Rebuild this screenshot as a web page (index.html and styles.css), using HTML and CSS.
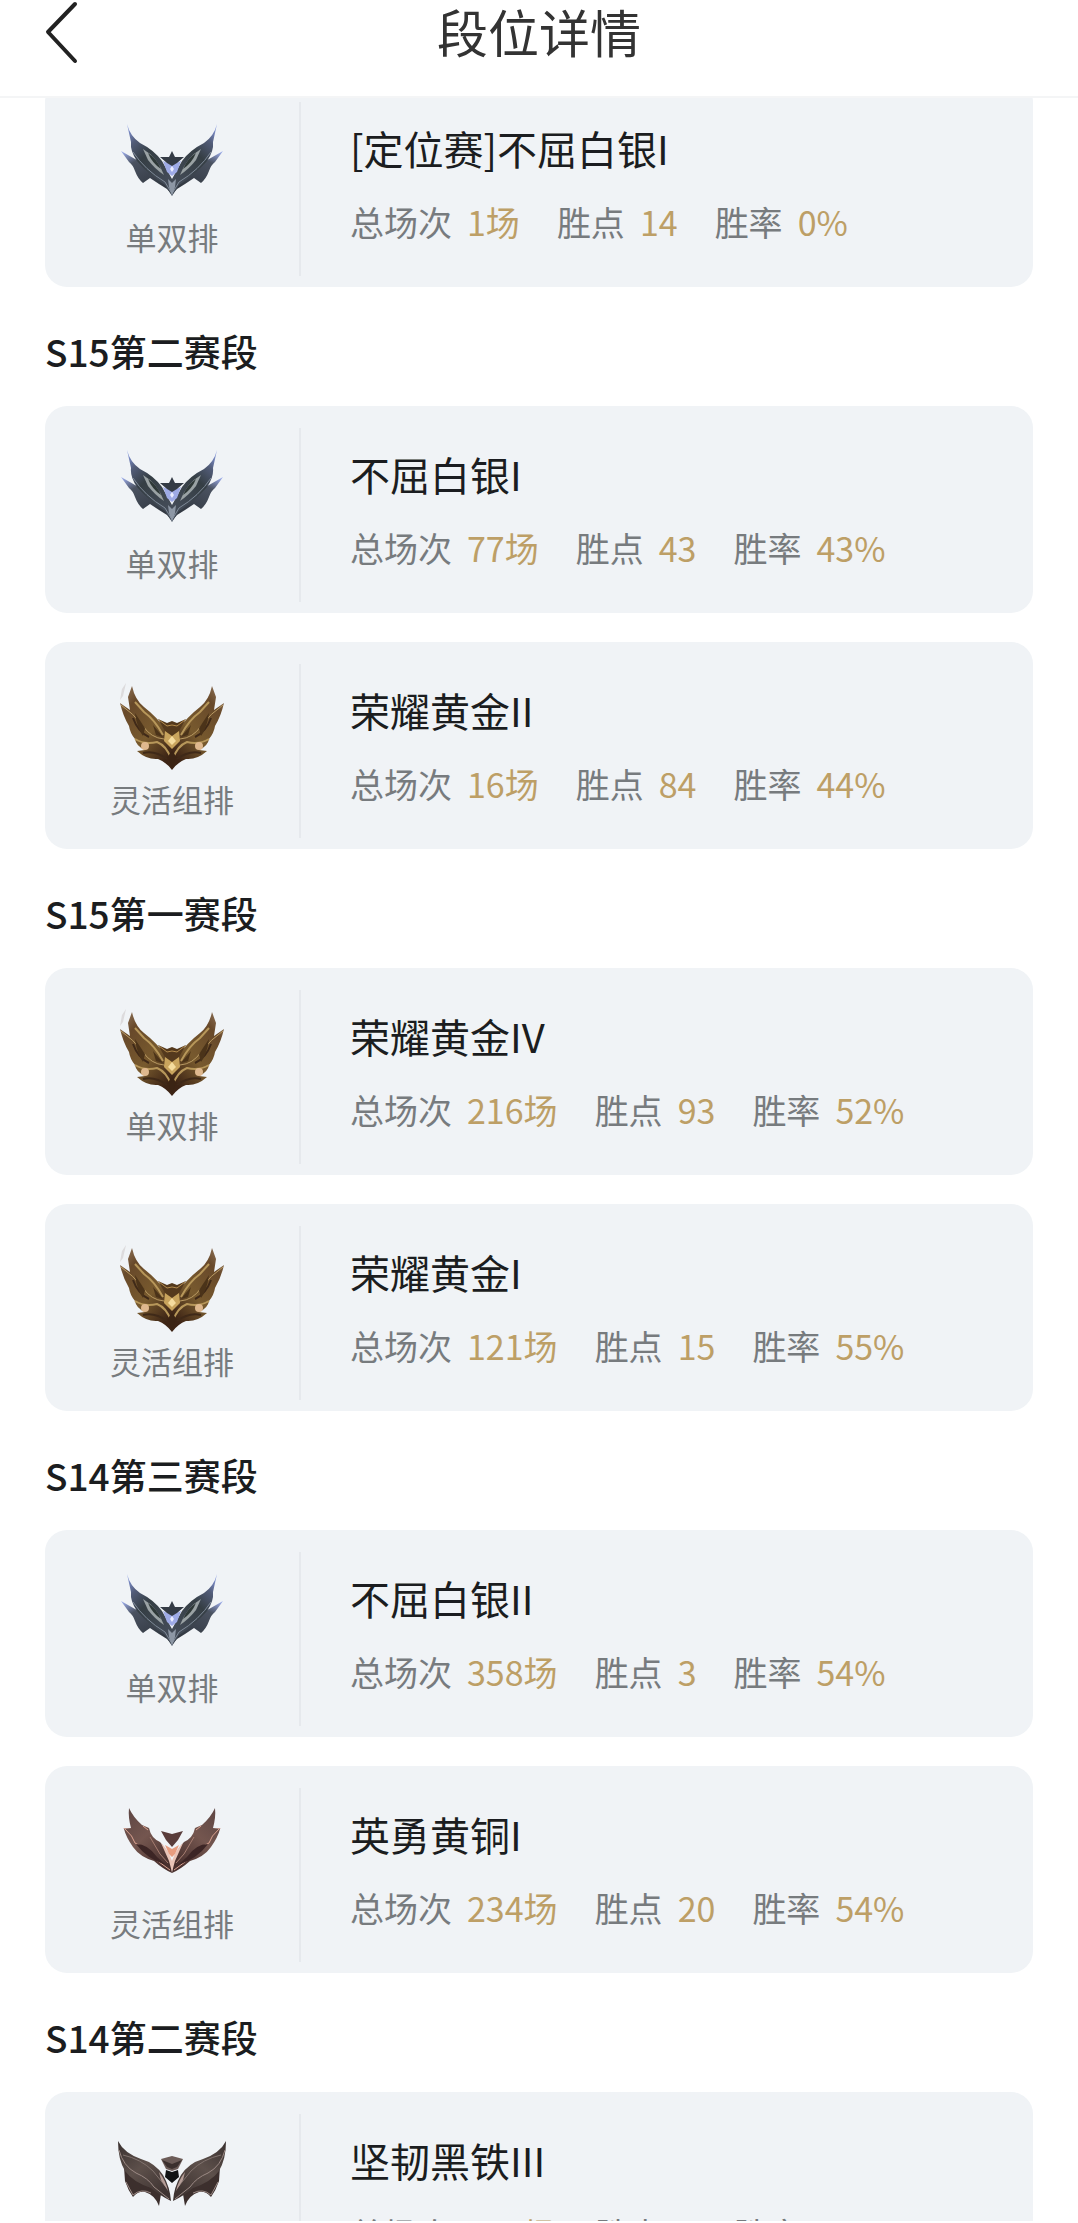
FILE: index.html
```html
<!DOCTYPE html>
<html lang="zh-CN">
<head>
<meta charset="utf-8">
<meta name="viewport" content="width=device-width, initial-scale=1">
<title>段位详情</title>
<link rel="stylesheet" href="styles.css">
</head>
<body>
<svg class="sprite" aria-hidden="true">
  <defs>
    <linearGradient id="g-silver" x1="0" y1="0" x2="0.6" y2="1">
      <stop offset="0" stop-color="#8fa4f2"/><stop offset="0.25" stop-color="#525c78"/><stop offset="0.5" stop-color="#353e44"/><stop offset="1" stop-color="#444c58"/>
    </linearGradient>
    <linearGradient id="g-silver-low" x1="0" y1="0" x2="0.6" y2="1">
      <stop offset="0" stop-color="#a5b6fa"/><stop offset="0.3" stop-color="#4a5260"/><stop offset="1" stop-color="#30363f"/>
    </linearGradient>
    <linearGradient id="g-gold" x1="0" y1="0" x2="0.7" y2="1">
      <stop offset="0" stop-color="#9a7f67"/><stop offset="0.25" stop-color="#68492a"/><stop offset="0.65" stop-color="#785a2e"/><stop offset="1" stop-color="#3d2415"/>
    </linearGradient>
    <linearGradient id="g-bronze" x1="0" y1="0" x2="0.7" y2="1">
      <stop offset="0" stop-color="#5c4442"/><stop offset="0.5" stop-color="#74564f"/><stop offset="1" stop-color="#49302e"/>
    </linearGradient>
    <linearGradient id="g-iron" x1="0" y1="0" x2="0.7" y2="1">
      <stop offset="0" stop-color="#39302f"/><stop offset="0.5" stop-color="#5d504b"/><stop offset="1" stop-color="#3e3331"/>
    </linearGradient>

    <g id="silver-wing">
      <path fill="url(#g-silver-low)" d="M22 42 L36 50 L52 57 L72 74 L73 86 L68 80 L60 75 L51 69 L44 74 Q39 70 36 62 Q34 56 30 53 Z"/>
      <path fill="url(#g-silver)" d="M28 15 Q31 27 41 34 Q55 41 63 52 L73 70 L73 87 L66 76 Q50 66 38 52 Q31 42 32 33 Z"/>
      <path fill="#9aa2a4" d="M44 40 Q58 48 65 66 Q56 60 49 51 Z"/>
      <path fill="#2f3938" d="M49 44 Q58 50 62 60 Q53 54 49 44 Z"/>
      <path fill="none" stroke="#7f8a98" stroke-width="1" d="M34 43 Q46 61 66 73 L72 83"/>
      <path fill="#8d97a5" d="M69 70 L73 74 L73 87 L70 78 Z"/>
    </g>
    <symbol id="silver" viewBox="0 0 146 110">
      <use href="#silver-wing"/>
      <use href="#silver-wing" transform="matrix(-1 0 0 1 146 0)"/>
      <path fill="#9eaae6" d="M64 52 L73 56 L82 52 L78 63 L73 67 L68 63 Z"/>
      <path fill="#343b45" d="M73 42 L76 48 L85 48 L78 54 L73 57 L68 54 L61 48 L70 48 Z"/>
      <path fill="#e9ecff" d="M73 57 L75 60 L73 63 L71 60 Z"/>
    </symbol>

    <g id="gold-wing">
      <path fill="url(#g-gold)" d="M33 15 Q36 29 45 36 Q58 46 68 60 L73 68 L73 99 Q67 91 59 88 Q48 89 38 80 L46 79 Q37 75 36 68 Q31 62 30 55 Q24 45 21 32 L31 39 L29 26 Z"/>
      <path fill="none" stroke="#b99a63" stroke-width="1" d="M22 34 Q34 42 44 55 Q52 67 65 68 L72 73"/>
      <path fill="none" stroke="#b7975a" stroke-width="2" d="M36 31 L45 41 Q56 49 64 64 M36 68 Q46 74 58 71 Q68 75 72 88"/>
      <path fill="none" stroke="#3f2918" stroke-width="2" d="M34 47 Q39 61 50 66 M44 82 Q56 79 68 88"/>
      <path fill="#4b3319" d="M36 42 L46 57 L44 65 Q38 57 36 42 Z M54 54 L64 66 L57 64 Z"/>
      <circle cx="46" cy="75" r="4" fill="#dfb88e"/>
    </g>
    <symbol id="gold" viewBox="0 0 146 110">
      <path fill="#c9c4c4" opacity="0.5" d="M27 12 L23 18 L21 29 L24 25 Z"/>
      <use href="#gold-wing"/>
      <use href="#gold-wing" transform="matrix(-1 0 0 1 146 0)"/>
      <path fill="#54391d" d="M59 48 L68 52 L73 50 L78 52 L87 48 L80 60 L73 67 L66 60 Z"/>
      <path fill="none" stroke="#b38b4d" stroke-width="1" d="M60 49 L68 55 L73 54 L78 55 L86 49"/>
      <path fill="#c9a45d" d="M66 60 L73 65 L80 60 L81 70 L73 78 L65 70 Z"/>
      <path fill="#f5dc9e" d="M73 65 L77 70 L73 74 L69 70 Z"/>
      <path fill="#3b2414" d="M73 80 L77 85 L73 98 L69 85 Z"/>
    </symbol>

    <g id="bronze-wing">
      <path fill="#c99283" d="M24 33 L35 34 L32 39 Z"/>
      <path fill="url(#g-bronze)" d="M30 13 Q34 22 43 30 L50 33 Q52 43 61 47 Q67 53 72 66 L73 78 Q64 74 55 66 Q41 62 34 52 Q27 42 25 34 L32 33 Q29 22 30 13 Z"/>
      <path fill="none" stroke="#dca391" stroke-width="1" d="M26 34 Q34 41 36 48 Q49 54 56 64 L71 75 M44 31 L49 35"/>
      <path fill="#3c2525" d="M37 49 Q49 49 58 62 L67 70 Q48 64 37 49 Z"/>
      <path fill="none" stroke="#a67d71" stroke-width="1" d="M51 42 L61 59 L69 68"/>
      <path fill="#e9c4b7" d="M62 48 Q69 54 73 66 L73 77 L70 66 Z"/>
    </g>
    <symbol id="bronze" viewBox="0 0 146 110">
      <use href="#bronze-wing"/>
      <use href="#bronze-wing" transform="matrix(-1 0 0 1 146 0)"/>
      <path fill="#e79d80" d="M66 50 L73 54 L80 50 L76 59 L73 62 L70 59 Z"/>
      <path fill="#5a3d3b" d="M62 36 L73 39 L84 36 L79 45 L73 52 L67 45 Z"/>
    </symbol>

    <g id="iron-wing">
      <path fill="#3c2f2d" d="M25 46 L40 60 L55 65 L62 73 L60 85 Q56 74 46 71 Q39 70 34 76 Q29 69 26 60 Z"/>
      <path fill="url(#g-iron)" d="M19 20 Q25 32 42 38 Q56 42 64 54 Q71 66 72 80 Q60 74 52 67 Q34 61 26 50 Q19 38 19 20 Z"/>
      <path fill="none" stroke="#9b8984" stroke-width="1" d="M20 29 Q24 45 37 52 Q49 57 55 66 L70 78 M27 61 L34 74 Q42 67 52 72"/>
      <path fill="none" stroke="#81736e" stroke-width="1" d="M24 34 Q42 38 54 50 L67 66"/>
      <path fill="#b69e98" d="M60 51 Q67 60 69 70 L62 59 Z"/>
    </g>
    <symbol id="iron" viewBox="0 0 146 110">
      <use href="#iron-wing"/>
      <use href="#iron-wing" transform="matrix(-1 0 0 1 146 0)"/>
      <path fill="#6c5c58" d="M62 38 L73 35 L84 38 L79 48 L73 50 L67 48 Z"/>
      <path fill="#3b302e" d="M63 39 L73 43 L83 39 L78 46 L73 48 L68 46 Z"/>
      <path fill="#111314" d="M67 49 L73 51 L79 49 L80 56 L73 62 L66 56 Z"/>
    </symbol>
  </defs>
</svg>

<div class="app">
  <header class="topbar">
    <button class="back" type="button" aria-label="返回">
      <svg viewBox="0 0 34 64" aria-hidden="true"><path d="M31 4 L4 32 L31 61"/></svg>
    </button>
    <h1 class="topbar-title">段位详情</h1>
  </header>

  <main class="content">
    <div class="seasons">
      <section class="season">
        <article class="card">
          <div class="queue"><svg class="emblem" aria-hidden="true"><use href="#silver"/></svg><span>单双排</span></div>
          <div class="detail">
            <h3 class="rank">[定位赛]不屈白银I</h3>
            <dl class="stats"><div><dt>总场次</dt><dd>1场</dd></div><div><dt>胜点</dt><dd>14</dd></div><div><dt>胜率</dt><dd>0%</dd></div></dl>
          </div>
        </article>
      </section>

      <section class="season">
        <h2 class="season-title">S15第二赛段</h2>
        <article class="card">
          <div class="queue"><svg class="emblem" aria-hidden="true"><use href="#silver"/></svg><span>单双排</span></div>
          <div class="detail">
            <h3 class="rank">不屈白银I</h3>
            <dl class="stats"><div><dt>总场次</dt><dd>77场</dd></div><div><dt>胜点</dt><dd>43</dd></div><div><dt>胜率</dt><dd>43%</dd></div></dl>
          </div>
        </article>
        <article class="card">
          <div class="queue"><svg class="emblem" aria-hidden="true"><use href="#gold"/></svg><span>灵活组排</span></div>
          <div class="detail">
            <h3 class="rank">荣耀黄金II</h3>
            <dl class="stats"><div><dt>总场次</dt><dd>16场</dd></div><div><dt>胜点</dt><dd>84</dd></div><div><dt>胜率</dt><dd>44%</dd></div></dl>
          </div>
        </article>
      </section>

      <section class="season">
        <h2 class="season-title">S15第一赛段</h2>
        <article class="card">
          <div class="queue"><svg class="emblem" aria-hidden="true"><use href="#gold"/></svg><span>单双排</span></div>
          <div class="detail">
            <h3 class="rank">荣耀黄金IV</h3>
            <dl class="stats"><div><dt>总场次</dt><dd>216场</dd></div><div><dt>胜点</dt><dd>93</dd></div><div><dt>胜率</dt><dd>52%</dd></div></dl>
          </div>
        </article>
        <article class="card">
          <div class="queue"><svg class="emblem" aria-hidden="true"><use href="#gold"/></svg><span>灵活组排</span></div>
          <div class="detail">
            <h3 class="rank">荣耀黄金I</h3>
            <dl class="stats"><div><dt>总场次</dt><dd>121场</dd></div><div><dt>胜点</dt><dd>15</dd></div><div><dt>胜率</dt><dd>55%</dd></div></dl>
          </div>
        </article>
      </section>

      <section class="season">
        <h2 class="season-title">S14第三赛段</h2>
        <article class="card">
          <div class="queue"><svg class="emblem" aria-hidden="true"><use href="#silver"/></svg><span>单双排</span></div>
          <div class="detail">
            <h3 class="rank">不屈白银II</h3>
            <dl class="stats"><div><dt>总场次</dt><dd>358场</dd></div><div><dt>胜点</dt><dd>3</dd></div><div><dt>胜率</dt><dd>54%</dd></div></dl>
          </div>
        </article>
        <article class="card">
          <div class="queue"><svg class="emblem" aria-hidden="true"><use href="#bronze"/></svg><span>灵活组排</span></div>
          <div class="detail">
            <h3 class="rank">英勇黄铜I</h3>
            <dl class="stats"><div><dt>总场次</dt><dd>234场</dd></div><div><dt>胜点</dt><dd>20</dd></div><div><dt>胜率</dt><dd>54%</dd></div></dl>
          </div>
        </article>
      </section>

      <section class="season">
        <h2 class="season-title">S14第二赛段</h2>
        <article class="card">
          <div class="queue"><svg class="emblem" aria-hidden="true"><use href="#iron"/></svg><span>单双排</span></div>
          <div class="detail">
            <h3 class="rank">坚韧黑铁III</h3>
            <dl class="stats"><div><dt>总场次</dt><dd>126场</dd></div><div><dt>胜点</dt><dd>0</dd></div><div><dt>胜率</dt><dd>50%</dd></div></dl>
          </div>
        </article>
      </section>
    </div>
  </main>
</div>
</body>
</html>
```
FILE: styles.css
```css
* {
  box-sizing: border-box;
}

body {
  margin: 0;
  background: #fff;
  color: #1b1d20;
  font-family: "Noto Sans CJK SC", sans-serif;
}

h1, h2, h3, dl, dd {
  margin: 0;
  font-weight: 400;
}

.sprite {
  position: absolute;
  width: 0;
  height: 0;
}

.app {
  display: flex;
  flex-direction: column;
  height: 100vh;
  padding-bottom: 2px;
}

.topbar {
  flex: none;
  display: grid;
  grid-template-columns: 1fr auto 1fr;
  align-items: start;
  height: 98px;
  padding: 0 44px;
  border-bottom: 2px solid #f4f5f6;
}

.back {
  justify-self: start;
  width: 34px;
  height: 64px;
  padding: 0;
  border: 0;
  background: none;
  cursor: pointer;
}

.back svg {
  display: block;
  width: 100%;
  height: 100%;
  fill: none;
  stroke: #222;
  stroke-width: 4;
  stroke-linecap: round;
  stroke-linejoin: round;
}

.topbar-title {
  font-size: 51px;
  line-height: 62px;
  color: #333;
}

.content {
  flex: 1;
  min-height: 0;
  overflow: hidden auto;
  scrollbar-width: none;
}

/* The first card is partly scrolled under the top bar */
.seasons {
  margin-top: -18px;
  padding: 0 45px;
}

.season {
  display: flow-root;
}

.season-title {
  height: 119px;
  padding-top: 36px;
  font-size: 37px;
  line-height: 56px;
  font-weight: 500;
}

.card {
  display: flex;
  height: 207px;
  border-radius: 22px;
  background: #f0f3f6;
}

.card + .card {
  margin-top: 29px;
}

.queue {
  flex: none;
  display: flex;
  flex-direction: column;
  align-items: center;
  width: 256px;
  margin: 22px 0 11px;
  border-right: 2px solid #e6e9ed;
  font-size: 31px;
  line-height: 44px;
  color: #777b7e;
}

.emblem {
  width: 146px;
  height: 110px;
  margin: 7px 0 -4px;
}

.detail {
  flex: 1;
  padding: 38px 0 0 49px;
}

.rank {
  font-size: 40px;
  line-height: 60px;
}

.stats {
  display: flex;
  gap: 37px;
  margin-top: 19px;
  font-size: 34px;
  line-height: 50px;
}

.stats div {
  display: flex;
  gap: 15px;
}

.stats dt {
  color: #777b7e;
}

.stats dd {
  color: #bd9f66;
}
```
